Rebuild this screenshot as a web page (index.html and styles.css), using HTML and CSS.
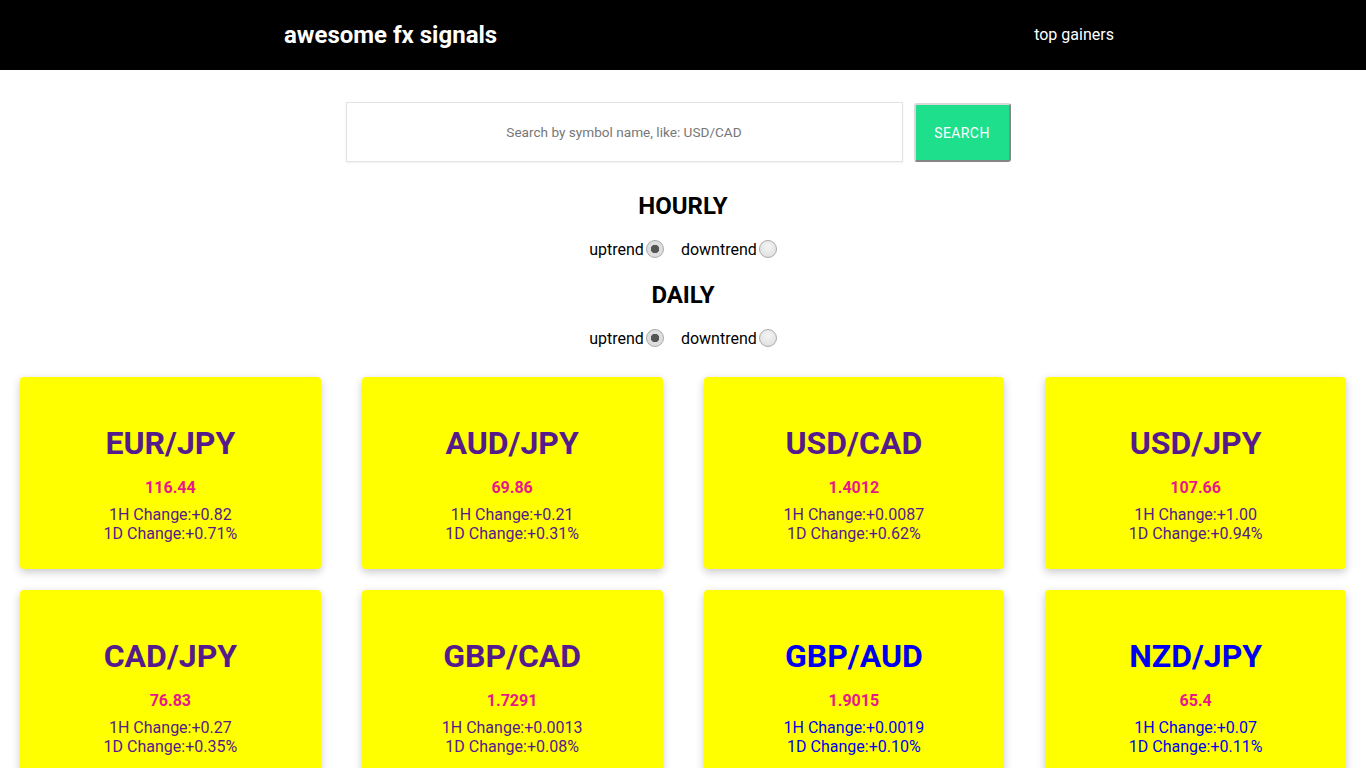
FILE: index.html
```html
<!DOCTYPE html>
<html lang="en">
<head>
<meta charset="utf-8">
<title>awesome fx signals</title>
<link rel="stylesheet" href="styles.css">
</head>
<body>
<header class="topbar">
  <a class="brand" href="#">awesome fx signals</a>
  <a class="navlink" href="#">top gainers</a>
</header>
<main>
  <form class="search">
    <input class="search-input" type="text" placeholder="Search by symbol name, like: USD/CAD">
    <button class="search-btn" type="button">SEARCH</button>
  </form>
  <section class="filter hourly">
    <h2 class="filter-title">HOURLY</h2>
    <div class="radios">
      <label class="opt">uptrend<input type="radio" name="h" checked></label>
      <label class="opt">downtrend<input type="radio" name="h"></label>
    </div>
  </section>
  <section class="filter daily">
    <h2 class="filter-title">DAILY</h2>
    <div class="radios">
      <label class="opt">uptrend<input type="radio" name="d" checked></label>
      <label class="opt">downtrend<input type="radio" name="d"></label>
    </div>
  </section>
  <div class="grid">
    <a class="card visited" href="#"><div class="sym">EUR/JPY</div><div class="price">116.44</div><div class="chg">1H Change:+0.82</div><div class="chg">1D Change:+0.71%</div></a>
    <a class="card visited" href="#"><div class="sym">AUD/JPY</div><div class="price">69.86</div><div class="chg">1H Change:+0.21</div><div class="chg">1D Change:+0.31%</div></a>
    <a class="card visited" href="#"><div class="sym">USD/CAD</div><div class="price">1.4012</div><div class="chg">1H Change:+0.0087</div><div class="chg">1D Change:+0.62%</div></a>
    <a class="card visited" href="#"><div class="sym">USD/JPY</div><div class="price">107.66</div><div class="chg">1H Change:+1.00</div><div class="chg">1D Change:+0.94%</div></a>
    <a class="card visited" href="#"><div class="sym">CAD/JPY</div><div class="price">76.83</div><div class="chg">1H Change:+0.27</div><div class="chg">1D Change:+0.35%</div></a>
    <a class="card visited" href="#"><div class="sym">GBP/CAD</div><div class="price">1.7291</div><div class="chg">1H Change:+0.0013</div><div class="chg">1D Change:+0.08%</div></a>
    <a class="card fresh" href="#"><div class="sym">GBP/AUD</div><div class="price">1.9015</div><div class="chg">1H Change:+0.0019</div><div class="chg">1D Change:+0.10%</div></a>
    <a class="card fresh" href="#"><div class="sym">NZD/JPY</div><div class="price">65.4</div><div class="chg">1H Change:+0.07</div><div class="chg">1D Change:+0.11%</div></a>
  </div>
</main>
</body>
</html>
```

FILE: styles.css
```css
* { box-sizing: border-box; }
html, body { margin: 0; padding: 0; }
body {
  font-family: Roboto, "Liberation Sans", sans-serif;
  color: #000;
  background: #fff;
}
.topbar {
  height: 70px;
  background: #000;
  display: flex;
  align-items: center;
  padding-left: 284px;
}
.brand {
  color: #fff;
  text-decoration: none;
  font-size: 24px;
  font-weight: 700;
  line-height: 28px;
}
.navlink {
  color: #fff;
  text-decoration: none;
  font-size: 16px;
  margin-left: 537px;
  margin-top: -2px;
}
.search {
  display: flex;
  justify-content: center;
  align-items: flex-start;
  gap: 11px;
  padding-right: 10px;
  margin: 32px 0 0;
}
.search-input {
  width: 557px;
  height: 60px;
  border: 1px solid #e3e3e3;
  box-shadow: 0 1px 2px rgba(0,0,0,0.06);
  text-align: center;
  font-family: Roboto, "Liberation Sans", sans-serif;
  font-size: 13.6px;
  outline: none;
  padding: 0;
}
.search-input::placeholder { color: #777; }
.search-btn {
  width: 97px;
  height: 59px;
  margin-top: 1px;
  background: #1ddf8c;
  color: #fff;
  font-family: Roboto, "Liberation Sans", sans-serif;
  font-size: 14px;
  letter-spacing: 0.4px;
  border: 2px solid;
  border-color: #d8d8d8 #858585 #858585 #d8d8d8;
  border-radius: 3px;
  padding: 0;
}
.filter { text-align: center; }
.filter-title {
  margin: 0;
  font-size: 24px;
  font-weight: 700;
  line-height: 28px;
}
.hourly .filter-title { margin-top: 30px; }
.daily .filter-title { margin-top: 21px; }
.radios {
  display: flex;
  justify-content: center;
  gap: 17px;
  height: 20px;
}
.hourly .radios { margin-top: 20px; }
.daily .radios { margin-top: 20px; }
.opt {
  display: inline-flex;
  align-items: center;
  font-size: 16px;
  line-height: 20px;
}
.opt input {
  appearance: none;
  -webkit-appearance: none;
  width: 18px;
  height: 18px;
  margin: -2px 0 0 2px;
  border-radius: 50%;
  border: 1px solid #a9a9a9;
  background: radial-gradient(circle at 50% 35%, #f4f4f4 0%, #dcdcdc 100%);
}
.opt input:checked {
  background: radial-gradient(circle, #555 0 4px, #dedede 4.5px);
}
.grid {
  display: grid;
  grid-template-columns: repeat(4, 1fr);
  column-gap: 41px;
  row-gap: 21px;
  padding: 0 20px;
  margin-top: 28px;
}
.card {
  display: block;
  height: 192px;
  background: #ffff00;
  border-radius: 4px;
  box-shadow: 0 3px 8px rgba(0,0,0,0.22);
  text-align: center;
  text-decoration: none;
  padding-top: 47px;
}
.card.visited { color: #551a8b; }
.card.fresh { color: #0000ee; }
.sym {
  font-size: 32px;
  font-weight: 700;
  line-height: 38px;
}
.price {
  color: #e8178b;
  font-size: 16px;
  font-weight: 700;
  line-height: 19px;
  margin-top: 16px;
  margin-bottom: 8px;
}
.chg {
  font-size: 16px;
  line-height: 19px;
}
```
